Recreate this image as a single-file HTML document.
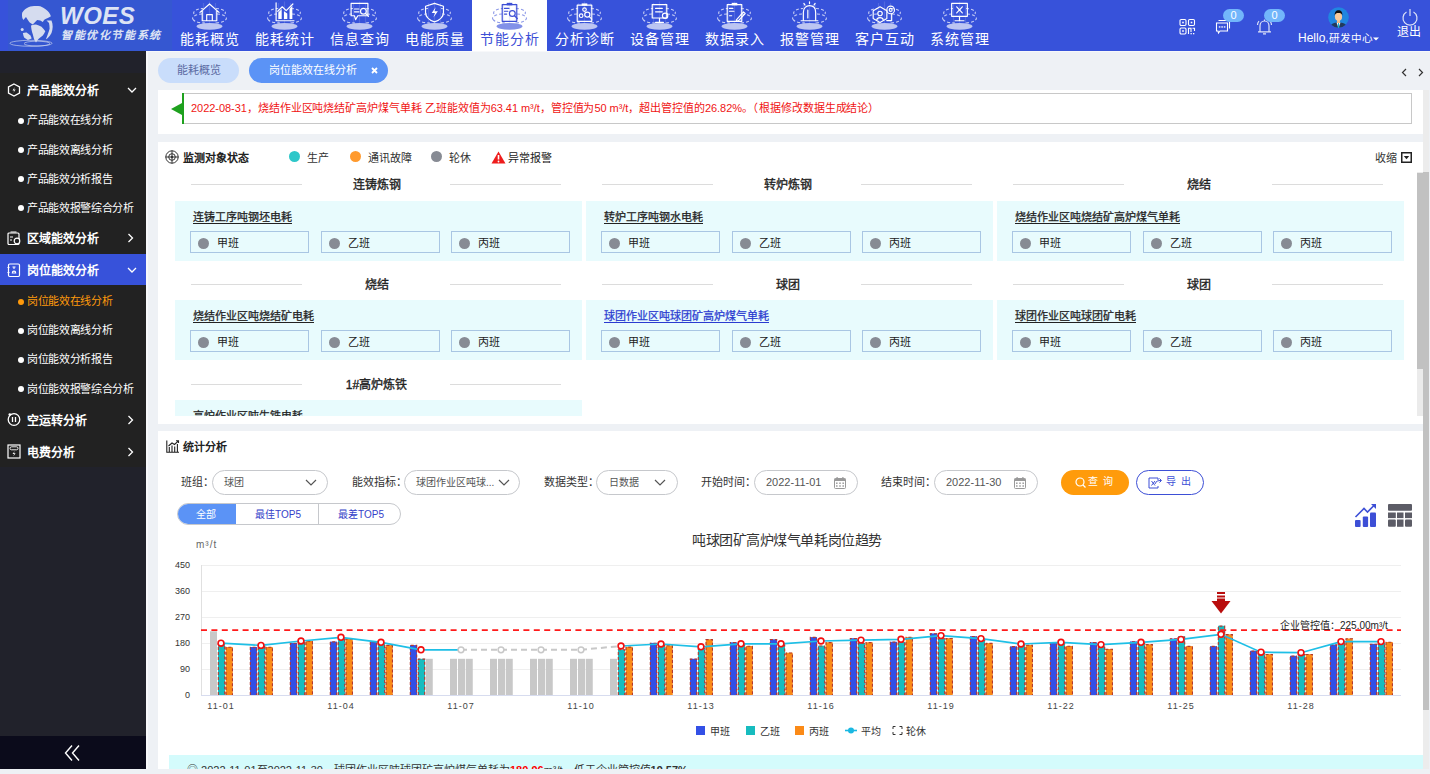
<!DOCTYPE html><html lang="zh-CN"><head><meta charset="utf-8"><style>
*{box-sizing:border-box;margin:0;padding:0}
html,body{width:1430px;height:774px;overflow:hidden;background:#eef1f5;font-family:"Liberation Sans",sans-serif;color:#333}
.a{position:absolute}
.t{position:absolute;white-space:nowrap}
.nav{position:absolute;top:0;width:75px;height:51px}
.nav .lb{position:absolute;left:0.35px;width:75px;top:31px;height:17px;line-height:17px;text-align:center;font-size:14px;letter-spacing:0.7px;color:#fff}
.nav svg{position:absolute;left:0;top:0}
.nav.on{background:#fff}
.nav.on .lb{color:#3d4fd6}
.mh{position:absolute;left:0;width:146px;height:31px}
.mh .tx{position:absolute;left:27px;top:0;line-height:31px;font-size:12px;font-weight:bold;color:#fff}
.mh svg{position:absolute}
.ms{position:absolute;left:0;width:146px;height:29px}
.ms .tx{position:absolute;left:27px;top:0;line-height:29px;font-size:11px;letter-spacing:-0.35px;color:#fff}
.ms .dot{position:absolute;left:18px;top:11.5px;width:6px;height:6px;border-radius:50%;background:#fff}
.pnl{position:absolute;background:#fff}
</style></head><body>
<div class="a" style="left:0;top:0;width:1430px;height:51px;background:#3752da"></div>
<div class="a" style="left:8px;top:0;width:164px;height:51px;background:#3557d1"></div>
<svg class="a" style="left:8px;top:2px" width="52" height="48" viewBox="8 2 52 48">
<ellipse cx="31" cy="43.3" rx="21" ry="3" fill="none" stroke="#c9d3ee" stroke-width="0.9" opacity="0.75"/>
<ellipse cx="37" cy="43.6" rx="13" ry="2.4" fill="none" stroke="#c9d3ee" stroke-width="0.9" opacity="0.75"/>
<g fill="#d5dcef">
<path d="M22.3 18.1 C21.8 15 22 13.5 22.3 12.6 C23.5 10.5 25 9 26.6 8.2 C29 6.8 31.5 6.1 34.1 6 C36.5 5.9 38.5 6 40.3 6.3 C42.5 7.2 44.3 8.2 45.9 9.5 C47.3 10.5 48.2 11.5 49 12.6 C49.8 13.8 50.4 15 50.9 16.3 C49.8 17 48.8 17.6 47.8 18.1 C46.6 18.6 45.5 18.9 44.6 19.4 C43.8 20.2 43.3 21 42.8 21.9 C42 21.5 41.2 21 40.3 20.6 C39.3 20.2 38.2 20 37.2 20 C36.3 20.8 35.5 21.6 34.7 22.5 C34 23.2 33.4 23.8 32.8 24.4 C31.7 23.8 30.7 23.1 29.7 22.5 C29 21.7 28.4 20.9 27.9 20 C27.2 19 26.6 18 26 16.9 C25 17.9 24.2 19 23.5 20 C23 19.4 22.6 18.8 22.3 18.1 Z"/>
<path d="M31 25.6 C32.6 24.8 34.3 24.4 36 24.4 C38 25 39.8 25.8 41.5 26.8 C43 28.2 44.3 29.6 45.3 31.2 C44.6 32.7 43.8 34.1 42.8 35.5 C41.6 36.6 40.3 37.6 39 38.6 C37.9 39.8 36.9 41.1 36 42.4 C35.3 41.4 34.7 40.4 34.1 39.3 C33.6 37.6 33.2 35.9 32.8 34.3 C32.3 32.9 31.9 31.4 31.6 30 C31.3 28.5 31.1 27 31 25.6 Z"/>
<path d="M22.9 33 C24.1 32.5 25.4 32.3 26.6 32.4 C28 33.3 29.3 34.4 30.4 35.5 C31 36.5 31.4 37.5 31.6 38.6 C30.4 39.2 29.2 39.6 27.9 39.9 C26.5 39.2 25.2 38.4 24.1 37.4 C23.5 36 23.1 34.5 22.9 33 Z"/>
<circle cx="22.2" cy="29.6" r="1.5"/>
<path d="M51.5 20.6 C52.3 22.6 52.7 24.7 52.7 26.8 C52.6 29 52.2 31 51.5 33 C50.5 34.9 49.3 36.6 47.8 38 C47.2 38.5 46.6 38.9 45.9 39.3 C46.6 37.6 47.2 36 47.8 34.3 C48.5 32.5 49.1 30.6 49.6 28.7 C49.6 26.8 49.4 25 49 23.1 C48.2 22.2 47.4 21.3 46.5 20.6 C48.2 20.5 49.8 20.5 51.5 20.6 Z"/>
</g>
</svg>
<div class="t" style="left:60px;top:3px;font-size:24px;line-height:26px;font-weight:bold;font-style:italic;color:#dde3f4;letter-spacing:0.5px">WOES</div>
<div class="t" style="left:61px;top:28px;font-size:11px;line-height:15px;font-weight:bold;font-style:italic;color:#dde3f4;letter-spacing:1.6px">智能优化节能系统</div>
<div class="nav" style="left:172px"><svg width="75" height="30" viewBox="0 0 75 30"><ellipse cx="37.5" cy="26.3" rx="13" ry="3.4" fill="#bcc5f2"/><path d="M31.5 3 V24 M37.5 1.5 V24 M43.5 3 V24" stroke="#c5ccf4" stroke-width="1.2" opacity="0.18"/><path d="M22 14 C20 11 26 8.5 31 8.5 M44 8.5 C49 8.5 55 11 53 14" stroke="#c5ccf4" stroke-width="1.1" fill="none" stroke-dasharray="3 2"/><path d="M21.5 20 C18 17 25 14 30 14 M45 14 C50 14 57 17 53.5 20 C51 22.5 45 23 42 23 M33 23 C30 23 24 22.5 21.5 20" stroke="#c5ccf4" stroke-width="1.1" fill="none" stroke-dasharray="3 2"/><g transform="translate(37.5 13.5) scale(1.12) translate(-37.5 -13)"><path d="M29 12 L37.5 4.5 L46 12 M31 10.5 V19.5 H44 V10.5 M35 19.5 V14 H40 V19.5" stroke="#ffffff" fill="none" stroke-width="1.05" stroke-linejoin="round" stroke-linecap="round"/></g></svg><div class="lb">能耗概览</div></div>
<div class="nav" style="left:247px"><svg width="75" height="30" viewBox="0 0 75 30"><ellipse cx="37.5" cy="26.3" rx="13" ry="3.4" fill="#bcc5f2"/><path d="M31.5 3 V24 M37.5 1.5 V24 M43.5 3 V24" stroke="#c5ccf4" stroke-width="1.2" opacity="0.18"/><path d="M22 14 C20 11 26 8.5 31 8.5 M44 8.5 C49 8.5 55 11 53 14" stroke="#c5ccf4" stroke-width="1.1" fill="none" stroke-dasharray="3 2"/><path d="M21.5 20 C18 17 25 14 30 14 M45 14 C50 14 57 17 53.5 20 C51 22.5 45 23 42 23 M33 23 C30 23 24 22.5 21.5 20" stroke="#c5ccf4" stroke-width="1.1" fill="none" stroke-dasharray="3 2"/><g transform="translate(37.5 13.5) scale(1.12) translate(-37.5 -13)"><path d="M30 3.5 V19.5 H46" stroke="#ffffff" fill="none" stroke-width="1.05" stroke-linejoin="round" stroke-linecap="round"/><path d="M32 18 V12 L35 9 V18 Z M37 18 V11 L40 13 V18 Z M42 18 V9 L44.5 6 V18 Z" fill="#ffffff"/><path d="M31.5 11 L35.5 7 L39 10.5 L45 4.5" stroke="#ffffff" fill="none" stroke-width="1.05" stroke-linejoin="round" stroke-linecap="round"/></g></svg><div class="lb">能耗统计</div></div>
<div class="nav" style="left:322px"><svg width="75" height="30" viewBox="0 0 75 30"><ellipse cx="37.5" cy="26.3" rx="13" ry="3.4" fill="#bcc5f2"/><path d="M31.5 3 V24 M37.5 1.5 V24 M43.5 3 V24" stroke="#c5ccf4" stroke-width="1.2" opacity="0.18"/><path d="M22 14 C20 11 26 8.5 31 8.5 M44 8.5 C49 8.5 55 11 53 14" stroke="#c5ccf4" stroke-width="1.1" fill="none" stroke-dasharray="3 2"/><path d="M21.5 20 C18 17 25 14 30 14 M45 14 C50 14 57 17 53.5 20 C51 22.5 45 23 42 23 M33 23 C30 23 24 22.5 21.5 20" stroke="#c5ccf4" stroke-width="1.1" fill="none" stroke-dasharray="3 2"/><g transform="translate(37.5 13.5) scale(1.12) translate(-37.5 -13)"><path d="M30 4 H45 V15 H36 L34 18.5 L33 15 H30 Z" stroke="#ffffff" fill="none" stroke-width="1.05" stroke-linejoin="round" stroke-linecap="round"/><path d="M33 9 H37 M33 11.5 H37" stroke="#ffffff" fill="none" stroke-width="1.05" stroke-linejoin="round" stroke-linecap="round"/><circle cx="41" cy="11" r="2.6" stroke="#ffffff" fill="none" stroke-width="1.05" stroke-linejoin="round" stroke-linecap="round"/><path d="M43 13 L45.5 15.5" stroke="#ffffff" fill="none" stroke-width="1.05" stroke-linejoin="round" stroke-linecap="round"/></g></svg><div class="lb">信息查询</div></div>
<div class="nav" style="left:397px"><svg width="75" height="30" viewBox="0 0 75 30"><ellipse cx="37.5" cy="26.3" rx="13" ry="3.4" fill="#bcc5f2"/><path d="M31.5 3 V24 M37.5 1.5 V24 M43.5 3 V24" stroke="#c5ccf4" stroke-width="1.2" opacity="0.18"/><path d="M22 14 C20 11 26 8.5 31 8.5 M44 8.5 C49 8.5 55 11 53 14" stroke="#c5ccf4" stroke-width="1.1" fill="none" stroke-dasharray="3 2"/><path d="M21.5 20 C18 17 25 14 30 14 M45 14 C50 14 57 17 53.5 20 C51 22.5 45 23 42 23 M33 23 C30 23 24 22.5 21.5 20" stroke="#c5ccf4" stroke-width="1.1" fill="none" stroke-dasharray="3 2"/><g transform="translate(37.5 13.5) scale(1.12) translate(-37.5 -13)"><path d="M37.5 4 L45.5 6.5 V12 C45.5 16 41.5 19 37.5 20.5 C33.5 19 29.5 16 29.5 12 V6.5 Z" stroke="#ffffff" fill="none" stroke-width="1.05" stroke-linejoin="round" stroke-linecap="round"/><path d="M38.5 7.5 L35 12.5 H38 L36.5 16.5 L40.5 11 H37.5 Z" fill="#ffffff"/></g></svg><div class="lb">电能质量</div></div>
<div class="nav on" style="left:472px"><svg width="75" height="30" viewBox="0 0 75 30"><ellipse cx="37.5" cy="26.3" rx="13" ry="3.4" fill="#8291e8"/><path d="M31.5 3 V24 M37.5 1.5 V24 M43.5 3 V24" stroke="#8f9be8" stroke-width="1.2" opacity="0.18"/><path d="M22 14 C20 11 26 8.5 31 8.5 M44 8.5 C49 8.5 55 11 53 14" stroke="#8f9be8" stroke-width="1.1" fill="none" stroke-dasharray="3 2"/><path d="M21.5 20 C18 17 25 14 30 14 M45 14 C50 14 57 17 53.5 20 C51 22.5 45 23 42 23 M33 23 C30 23 24 22.5 21.5 20" stroke="#8f9be8" stroke-width="1.1" fill="none" stroke-dasharray="3 2"/><g transform="translate(37.5 13.5) scale(1.12) translate(-37.5 -13)"><path d="M31 5 H44 V20 H31 Z" stroke="#3d4fd6" fill="none" stroke-width="1.05" stroke-linejoin="round" stroke-linecap="round"/><rect x="35" y="3.5" width="5" height="2.2" fill="#3d4fd6"/><path d="M33 8.5 H37 M33 11 H36 M33 13.5 H35" stroke="#3d4fd6" fill="none" stroke-width="1.05" stroke-linejoin="round" stroke-linecap="round"/><circle cx="40" cy="13" r="2.6" stroke="#3d4fd6" fill="none" stroke-width="1.05" stroke-linejoin="round" stroke-linecap="round"/><path d="M42 15 L44.5 17.5" stroke="#3d4fd6" fill="none" stroke-width="1.05" stroke-linejoin="round" stroke-linecap="round"/></g></svg><div class="lb">节能分析</div></div>
<div class="nav" style="left:547px"><svg width="75" height="30" viewBox="0 0 75 30"><ellipse cx="37.5" cy="26.3" rx="13" ry="3.4" fill="#bcc5f2"/><path d="M31.5 3 V24 M37.5 1.5 V24 M43.5 3 V24" stroke="#c5ccf4" stroke-width="1.2" opacity="0.18"/><path d="M22 14 C20 11 26 8.5 31 8.5 M44 8.5 C49 8.5 55 11 53 14" stroke="#c5ccf4" stroke-width="1.1" fill="none" stroke-dasharray="3 2"/><path d="M21.5 20 C18 17 25 14 30 14 M45 14 C50 14 57 17 53.5 20 C51 22.5 45 23 42 23 M33 23 C30 23 24 22.5 21.5 20" stroke="#c5ccf4" stroke-width="1.1" fill="none" stroke-dasharray="3 2"/><g transform="translate(37.5 13.5) scale(1.12) translate(-37.5 -13)"><path d="M31 5.5 H44 V20 H31 Z" stroke="#ffffff" fill="none" stroke-width="1.05" stroke-linejoin="round" stroke-linecap="round"/><rect x="35" y="4" width="5" height="2" fill="#ffffff"/><circle cx="37.5" cy="9.5" r="1.6" stroke="#ffffff" fill="none" stroke-width="1.05" stroke-linejoin="round" stroke-linecap="round"/><circle cx="34.5" cy="15" r="1.6" stroke="#ffffff" fill="none" stroke-width="1.05" stroke-linejoin="round" stroke-linecap="round"/><circle cx="40" cy="14" r="2.3" stroke="#ffffff" fill="none" stroke-width="1.05" stroke-linejoin="round" stroke-linecap="round"/><path d="M41.8 15.8 L44 18" stroke="#ffffff" fill="none" stroke-width="1.05" stroke-linejoin="round" stroke-linecap="round"/></g></svg><div class="lb">分析诊断</div></div>
<div class="nav" style="left:622px"><svg width="75" height="30" viewBox="0 0 75 30"><ellipse cx="37.5" cy="26.3" rx="13" ry="3.4" fill="#bcc5f2"/><path d="M31.5 3 V24 M37.5 1.5 V24 M43.5 3 V24" stroke="#c5ccf4" stroke-width="1.2" opacity="0.18"/><path d="M22 14 C20 11 26 8.5 31 8.5 M44 8.5 C49 8.5 55 11 53 14" stroke="#c5ccf4" stroke-width="1.1" fill="none" stroke-dasharray="3 2"/><path d="M21.5 20 C18 17 25 14 30 14 M45 14 C50 14 57 17 53.5 20 C51 22.5 45 23 42 23 M33 23 C30 23 24 22.5 21.5 20" stroke="#c5ccf4" stroke-width="1.1" fill="none" stroke-dasharray="3 2"/><g transform="translate(37.5 13.5) scale(1.12) translate(-37.5 -13)"><path d="M31 5 H44 V17 H31 Z M37.5 17 V20.5 M34 21 H41" stroke="#ffffff" fill="none" stroke-width="1.05" stroke-linejoin="round" stroke-linecap="round"/><path d="M34 8.5 H40 M34 11.5 H40" stroke="#ffffff" fill="none" stroke-width="1.05" stroke-linejoin="round" stroke-linecap="round"/><circle cx="42.5" cy="15" r="2.4" stroke="#ffffff" fill="none" stroke-width="1.05" stroke-linejoin="round" stroke-linecap="round"/></g></svg><div class="lb">设备管理</div></div>
<div class="nav" style="left:697px"><svg width="75" height="30" viewBox="0 0 75 30"><ellipse cx="37.5" cy="26.3" rx="13" ry="3.4" fill="#bcc5f2"/><path d="M31.5 3 V24 M37.5 1.5 V24 M43.5 3 V24" stroke="#c5ccf4" stroke-width="1.2" opacity="0.18"/><path d="M22 14 C20 11 26 8.5 31 8.5 M44 8.5 C49 8.5 55 11 53 14" stroke="#c5ccf4" stroke-width="1.1" fill="none" stroke-dasharray="3 2"/><path d="M21.5 20 C18 17 25 14 30 14 M45 14 C50 14 57 17 53.5 20 C51 22.5 45 23 42 23 M33 23 C30 23 24 22.5 21.5 20" stroke="#c5ccf4" stroke-width="1.1" fill="none" stroke-dasharray="3 2"/><g transform="translate(37.5 13.5) scale(1.12) translate(-37.5 -13)"><path d="M31 5 H44 V20 H31 Z" stroke="#ffffff" fill="none" stroke-width="1.05" stroke-linejoin="round" stroke-linecap="round"/><rect x="35" y="3.5" width="5" height="2.2" fill="#ffffff"/><path d="M33 8.5 H36 M33 11 H37 M33 15 H35" stroke="#ffffff" fill="none" stroke-width="1.05" stroke-linejoin="round" stroke-linecap="round"/><path d="M39 19 L45.5 11.5 L47 13 L40.5 20 Z" stroke="#ffffff" fill="none" stroke-width="1.05" stroke-linejoin="round" stroke-linecap="round"/></g></svg><div class="lb">数据录入</div></div>
<div class="nav" style="left:772px"><svg width="75" height="30" viewBox="0 0 75 30"><ellipse cx="37.5" cy="26.3" rx="13" ry="3.4" fill="#bcc5f2"/><path d="M31.5 3 V24 M37.5 1.5 V24 M43.5 3 V24" stroke="#c5ccf4" stroke-width="1.2" opacity="0.18"/><path d="M22 14 C20 11 26 8.5 31 8.5 M44 8.5 C49 8.5 55 11 53 14" stroke="#c5ccf4" stroke-width="1.1" fill="none" stroke-dasharray="3 2"/><path d="M21.5 20 C18 17 25 14 30 14 M45 14 C50 14 57 17 53.5 20 C51 22.5 45 23 42 23 M33 23 C30 23 24 22.5 21.5 20" stroke="#c5ccf4" stroke-width="1.1" fill="none" stroke-dasharray="3 2"/><g transform="translate(37.5 13.5) scale(1.12) translate(-37.5 -13)"><path d="M32 19 V12 C32 8 34.5 6 37.5 6 C40.5 6 43 8 43 12 V19" stroke="#ffffff" fill="none" stroke-width="1.05" stroke-linejoin="round" stroke-linecap="round"/><path d="M30 19.5 H45 M36 10 V17 M37.5 2.5 V4 M32.5 4 L33.5 5.5 M42.5 4 L41.5 5.5" stroke="#ffffff" fill="none" stroke-width="1.05" stroke-linejoin="round" stroke-linecap="round"/></g></svg><div class="lb">报警管理</div></div>
<div class="nav" style="left:847px"><svg width="75" height="30" viewBox="0 0 75 30"><ellipse cx="37.5" cy="26.3" rx="13" ry="3.4" fill="#bcc5f2"/><path d="M31.5 3 V24 M37.5 1.5 V24 M43.5 3 V24" stroke="#c5ccf4" stroke-width="1.2" opacity="0.18"/><path d="M22 14 C20 11 26 8.5 31 8.5 M44 8.5 C49 8.5 55 11 53 14" stroke="#c5ccf4" stroke-width="1.1" fill="none" stroke-dasharray="3 2"/><path d="M21.5 20 C18 17 25 14 30 14 M45 14 C50 14 57 17 53.5 20 C51 22.5 45 23 42 23 M33 23 C30 23 24 22.5 21.5 20" stroke="#c5ccf4" stroke-width="1.1" fill="none" stroke-dasharray="3 2"/><g transform="translate(37.5 13.5) scale(1.12) translate(-37.5 -13)"><path d="M33.5 7 L39.6 10.5 V17.5 L33.5 21 L27.4 17.5 V10.5 Z" stroke="#ffffff" fill="none" stroke-width="1.05" stroke-linejoin="round" stroke-linecap="round"/><circle cx="33.5" cy="13" r="2" stroke="#ffffff" fill="none" stroke-width="1.05" stroke-linejoin="round" stroke-linecap="round"/><path d="M30.6 18.8 C31 16 36 16 36.4 18.8" stroke="#ffffff" fill="none" stroke-width="1.05" stroke-linejoin="round" stroke-linecap="round"/><circle cx="43" cy="9.8" r="3.4" stroke="#ffffff" fill="none" stroke-width="1.05" stroke-linejoin="round" stroke-linecap="round"/><circle cx="43" cy="9.8" r="1.3" stroke="#ffffff" fill="none" stroke-width="1.05" stroke-linejoin="round" stroke-linecap="round"/><path d="M43.9 13.6 V19.3 H39.5" stroke="#ffffff" fill="none" stroke-width="1.05" stroke-linejoin="round" stroke-linecap="round"/></g></svg><div class="lb">客户互动</div></div>
<div class="nav" style="left:922px"><svg width="75" height="30" viewBox="0 0 75 30"><ellipse cx="37.5" cy="26.3" rx="13" ry="3.4" fill="#bcc5f2"/><path d="M31.5 3 V24 M37.5 1.5 V24 M43.5 3 V24" stroke="#c5ccf4" stroke-width="1.2" opacity="0.18"/><path d="M22 14 C20 11 26 8.5 31 8.5 M44 8.5 C49 8.5 55 11 53 14" stroke="#c5ccf4" stroke-width="1.1" fill="none" stroke-dasharray="3 2"/><path d="M21.5 20 C18 17 25 14 30 14 M45 14 C50 14 57 17 53.5 20 C51 22.5 45 23 42 23 M33 23 C30 23 24 22.5 21.5 20" stroke="#c5ccf4" stroke-width="1.1" fill="none" stroke-dasharray="3 2"/><g transform="translate(37.5 13.5) scale(1.12) translate(-37.5 -13)"><path d="M30.5 4 H44.5 V15.5 H30.5 Z M37.5 15.5 V19 M33.5 19.5 H41.5" stroke="#ffffff" fill="none" stroke-width="1.05" stroke-linejoin="round" stroke-linecap="round"/><path d="M35 7 L40 12.5 M40 7 L35 12.5" stroke="#ffffff" fill="none" stroke-width="1.05" stroke-linejoin="round" stroke-linecap="round"/></g></svg><div class="lb">系统管理</div></div>
<svg class="a" style="left:1179px;top:18px" width="17" height="17" viewBox="0 0 17 17">
<g fill="none" stroke="#fff" stroke-width="1.1">
<rect x="1" y="1.5" width="6" height="6" rx="1.2"/><rect x="9.5" y="1.5" width="6" height="6" rx="1.2"/><rect x="1" y="10" width="6" height="6" rx="1.2"/>
<path d="M9.5 16 V10.2 H12 V14 M13.5 10.2 H15.5 V13"/>
</g>
<g fill="#fff"><rect x="3.2" y="3.7" width="1.6" height="1.6"/><rect x="11.7" y="3.7" width="1.6" height="1.6"/><rect x="3.2" y="12.2" width="1.6" height="1.6"/><rect x="14" y="15" width="1.3" height="1.3"/><rect x="11.5" y="15" width="1.3" height="1.3"/></g>
</svg>
<svg class="a" style="left:1215px;top:19px" width="17" height="16" viewBox="0 0 17 16">
<g fill="none" stroke="#fff" stroke-width="1.1">
<path d="M3.5 1.5 H14.5 V9.5"/>
<path d="M1.5 4 H12.5 V12 H5 L3.5 14 L3 12 H1.5 Z"/>
</g>
<g fill="#fff"><rect x="3.8" y="7.3" width="1.6" height="1.3"/><rect x="6.3" y="7.3" width="1.6" height="1.3"/><rect x="8.8" y="7.3" width="1.6" height="1.3"/></g>
</svg>
<div class="a" style="left:1223px;top:9px;width:21px;height:13px;border-radius:7px;background:#72b6fb;color:#fff;font-size:11px;line-height:13px;text-align:center">0</div>
<svg class="a" style="left:1256px;top:18px" width="17" height="17" viewBox="0 0 17 17">
<g fill="none" stroke="#dfe4f8" stroke-width="1.2">
<path d="M4 13.5 V8 C4 5 6 3 8.5 3 C11 3 13 5 13 8 V13.5 M2 13.8 H15 M7 15.8 H10 M8.5 1.5 V3"/>
<path d="M1.5 7 C1.5 5 2.2 4 3 3.2 M15.5 7 C15.5 5 14.8 4 14 3.2"/>
</g></svg>
<div class="a" style="left:1264px;top:9px;width:21px;height:13px;border-radius:7px;background:#72b6fb;color:#fff;font-size:11px;line-height:13px;text-align:center">0</div>
<svg class="a" style="left:1328px;top:7px" width="21" height="21" viewBox="0 0 21 21">
<defs><clipPath id="avc"><circle cx="10.5" cy="10.5" r="10.3"/></clipPath></defs>
<circle cx="10.5" cy="10.5" r="10.3" fill="#2186e0"/>
<g clip-path="url(#avc)">
<path d="M2 21 C3 16 6 15.5 10.5 15.5 C15 15.5 18 16 19 21 Z" fill="#233a5c"/>
<path d="M8.5 15.5 L10.5 21 L12.5 15.5 Z" fill="#fff"/>
<path d="M10 16 L11 16 L11.3 21 L9.7 21 Z" fill="#1ab0d8"/>
<rect x="9" y="12.5" width="3" height="3.5" fill="#f0b98a"/>
<ellipse cx="10.5" cy="9.5" rx="3.6" ry="4.3" fill="#f7c99b"/>
<path d="M6.7 8.5 C6.5 4.5 8.5 3.2 10.5 3.2 C13 3.2 14.6 4.6 14.3 8.5 C13.8 6.5 12.5 6 10.5 6 C8.5 6 7.2 6.5 6.7 8.5 Z" fill="#111"/>
</g></svg>
<div class="t" style="left:1298px;top:31px;font-size:12px;line-height:14px;color:#fff">Hello,<span style="font-size:10.6px">研发中心</span></div>
<svg class="a" style="left:1373px;top:37px" width="6" height="4" viewBox="0 0 6 4"><path d="M0 0.5 H6 L3 3.5 Z" fill="#fff"/></svg>
<svg class="a" style="left:1401px;top:8px" width="18" height="18" viewBox="0 0 18 18">
<path d="M5.5 4 A7 7 0 1 0 12.5 4" fill="none" stroke="#dfe4f8" stroke-width="1.2"/>
<path d="M9 1 V8" stroke="#dfe4f8" stroke-width="1.2"/></svg>
<div class="t" style="left:1397px;top:25px;font-size:12px;line-height:14px;color:#fff">退出</div>
<div class="a" style="left:146px;top:51px;width:1284px;height:1px;background:#f7f8fa"></div>
<div class="a" style="left:0;top:51px;width:146px;height:718px;background:#21222b"></div>
<div class="a" style="left:0;top:73px;width:146px;height:394px;background:#222222"></div>
<div class="a" style="left:0;top:736px;width:146px;height:33px;background:#0b0b1b"></div>
<svg class="a" style="left:64px;top:744px" width="17" height="18" viewBox="0 0 17 18"><path d="M8 1.5 L1.5 9 L8 16.5 M15 1.5 L8.5 9 L15 16.5" fill="none" stroke="#fff" stroke-width="1.4"/></svg>
<div class="a" style="left:0;top:254px;width:146px;height:31px;background:#3752da"></div>
<div class="mh" style="top:76.3px"><div class="tx">产品能效分析</div></div>
<svg class="a" style="left:6.5px;top:82.5px" width="14" height="15" viewBox="0 0 14 15"><path d="M7 1 L12.5 4 V10 L7 13 L1.5 10 V4 Z" fill="none" stroke="#fff" stroke-width="1.3"/><path d="M7.8 4 L5.5 7.5 H7.3 L6.3 10 L8.6 6.6 H6.9 Z" fill="#fff"/></svg>
<svg class="a" style="left:127px;top:87.0px" width="10" height="6" viewBox="0 0 10 6"><path d="M1 1 L5 5 L9 1" fill="none" stroke="#fff" stroke-width="1.3"/></svg>
<div class="ms" style="top:106.0px"><div class="dot" style="background:#fff"></div><div class="tx" style="color:#fff">产品能效在线分析</div></div>
<div class="ms" style="top:135.5px"><div class="dot" style="background:#fff"></div><div class="tx" style="color:#fff">产品能效离线分析</div></div>
<div class="ms" style="top:164.5px"><div class="dot" style="background:#fff"></div><div class="tx" style="color:#fff">产品能效分析报告</div></div>
<div class="ms" style="top:193.5px"><div class="dot" style="background:#fff"></div><div class="tx" style="color:#fff">产品能效报警综合分析</div></div>
<div class="mh" style="top:224.3px"><div class="tx">区域能效分析</div></div>
<svg class="a" style="left:6.5px;top:230.5px" width="14" height="15" viewBox="0 0 14 15"><rect x="1" y="2" width="11" height="11.5" rx="1" fill="none" stroke="#fff" stroke-width="1.2"/><path d="M3.5 1 H9.5 M3 6 H6 M3 9 H5" stroke="#fff" stroke-width="1.2"/><circle cx="10" cy="10" r="2.8" fill="#222" stroke="#fff" stroke-width="1.2"/></svg>
<svg class="a" style="left:127px;top:233.0px" width="7" height="10" viewBox="0 0 7 10"><path d="M1.5 1 L5.5 5 L1.5 9" fill="none" stroke="#fff" stroke-width="1.3"/></svg>
<div class="mh" style="top:256.3px"><div class="tx">岗位能效分析</div></div>
<svg class="a" style="left:6.5px;top:262.5px" width="14" height="15" viewBox="0 0 14 15"><rect x="1.5" y="1" width="11" height="12.5" rx="1.2" fill="none" stroke="#fff" stroke-width="1.2"/><path d="M0.5 4.5 H2.5 M0.5 9.5 H2.5 M5.5 4 H8.5 M7 4 V6 M5.3 10 C5.3 7.5 8.7 7.5 8.7 10 Z" fill="none" stroke="#fff" stroke-width="1.1"/></svg>
<svg class="a" style="left:127px;top:267.0px" width="10" height="6" viewBox="0 0 10 6"><path d="M1 1 L5 5 L9 1" fill="none" stroke="#fff" stroke-width="1.3"/></svg>
<div class="ms" style="top:287.0px"><div class="dot" style="background:#ff9a0b"></div><div class="tx" style="color:#ff9a0b">岗位能效在线分析</div></div>
<div class="ms" style="top:316.0px"><div class="dot" style="background:#fff"></div><div class="tx" style="color:#fff">岗位能效离线分析</div></div>
<div class="ms" style="top:345.0px"><div class="dot" style="background:#fff"></div><div class="tx" style="color:#fff">岗位能效分析报告</div></div>
<div class="ms" style="top:374.5px"><div class="dot" style="background:#fff"></div><div class="tx" style="color:#fff">岗位能效报警综合分析</div></div>
<div class="mh" style="top:406.0px"><div class="tx">空运转分析</div></div>
<svg class="a" style="left:6.5px;top:412.2px" width="14" height="15" viewBox="0 0 14 15"><circle cx="7" cy="7.5" r="5.8" fill="none" stroke="#fff" stroke-width="1.3"/><path d="M5.5 5 V10 M8.5 5 V10" stroke="#fff" stroke-width="1.3"/><circle cx="2.8" cy="2.5" r="1.3" fill="#fff"/></svg>
<svg class="a" style="left:127px;top:414.7px" width="7" height="10" viewBox="0 0 7 10"><path d="M1.5 1 L5.5 5 L1.5 9" fill="none" stroke="#fff" stroke-width="1.3"/></svg>
<div class="mh" style="top:438.0px"><div class="tx">电费分析</div></div>
<svg class="a" style="left:6.5px;top:444.2px" width="14" height="15" viewBox="0 0 14 15"><rect x="1" y="1" width="12" height="13" fill="none" stroke="#fff" stroke-width="1.2"/><rect x="3" y="2.8" width="8" height="3" rx="1.5" fill="none" stroke="#fff" stroke-width="0.9"/><path d="M7.8 7 L5.5 10 H7.2 L6.2 12.5 L8.6 9.3 H6.9 Z" fill="#fff"/></svg>
<svg class="a" style="left:127px;top:446.7px" width="7" height="10" viewBox="0 0 7 10"><path d="M1.5 1 L5.5 5 L1.5 9" fill="none" stroke="#fff" stroke-width="1.3"/></svg>
<div class="a" style="left:146px;top:52px;width:2px;height:717px;background:#f8f9fb"></div>
<div class="a" style="left:158px;top:58px;width:81px;height:25px;border-radius:12.5px;background:#c9ddfb"></div>
<div class="t" style="left:158px;top:58px;width:81px;height:25px;line-height:25px;text-align:center;font-size:11px;color:#5c6ba3">能耗概览</div>
<div class="a" style="left:249px;top:58px;width:139px;height:25px;border-radius:12.5px;background:#5b93f6"></div>
<div class="t" style="left:269px;top:58px;height:25px;line-height:25px;font-size:11px;color:#fff">岗位能效在线分析</div>
<svg class="a" style="left:371px;top:67px" width="7" height="7" viewBox="0 0 7 7"><path d="M1 1 L6 6 M6 1 L1 6" stroke="#fff" stroke-width="1.8"/></svg>
<svg class="a" style="left:1401px;top:68px" width="6" height="9" viewBox="0 0 6 9"><path d="M5 1 L1.5 4.5 L5 8" fill="none" stroke="#333" stroke-width="1.2"/></svg>
<svg class="a" style="left:1418px;top:68px" width="6" height="9" viewBox="0 0 6 9"><path d="M1 1 L4.5 4.5 L1 8" fill="none" stroke="#333" stroke-width="1.2"/></svg>
<div class="pnl" style="left:158px;top:90px;width:1265px;height:44px"></div>
<div class="a" style="left:184px;top:93px;width:1228px;height:31px;border:1px solid #c8c8c8;border-left:none"></div>
<div class="a" style="left:182px;top:93px;width:2px;height:31px;background:#1ea11e"></div>
<svg class="a" style="left:171px;top:103px" width="11" height="12" viewBox="0 0 11 12"><path d="M11 0 V12 L0 6 Z" fill="#1ea11e"/></svg>
<div class="t" style="left:191px;top:100px;height:16px;line-height:16px;font-size:11px;letter-spacing:-0.05px;color:#f01414">2022-08-31，烧结作业区吨烧结矿高炉煤气单耗 乙班能效值为63.41 m³/t，管控值为50 m³/t，超出管控值的26.82%。（根据修改数据生成结论）</div>
<div class="pnl" style="left:158px;top:142px;width:1265px;height:282px"></div>
<svg class="a" style="left:165px;top:150px" width="14" height="14" viewBox="0 0 14 14"><g fill="none" stroke="#333" stroke-width="1"><circle cx="7" cy="7" r="6.2"/><circle cx="7" cy="7" r="3.3"/><path d="M7 0.5 V13.5 M0.5 7 H13.5"/></g><circle cx="7" cy="7" r="1.2" fill="#333"/></svg>
<div class="t" style="left:183px;top:150px;height:16px;line-height:16px;font-size:11px;font-weight:bold;color:#222">监测对象状态</div>
<div class="a" style="left:289px;top:151px;width:11px;height:11px;border-radius:50%;background:#2ec7c9"></div>
<div class="t" style="left:307px;top:150px;height:16px;line-height:16px;font-size:11px;color:#333">生产</div>
<div class="a" style="left:350px;top:151px;width:11px;height:11px;border-radius:50%;background:#ff9a2e"></div>
<div class="t" style="left:368px;top:150px;height:16px;line-height:16px;font-size:11px;color:#333">通讯故障</div>
<div class="a" style="left:431px;top:151px;width:11px;height:11px;border-radius:50%;background:#878b94"></div>
<div class="t" style="left:449px;top:150px;height:16px;line-height:16px;font-size:11px;color:#333">轮休</div>
<svg class="a" style="left:491px;top:151px" width="15" height="13" viewBox="0 0 15 13"><path d="M7.5 0.5 L14.5 12.5 H0.5 Z" fill="#ee1c1c"/><path d="M7.5 4 V8.5" stroke="#fff" stroke-width="1.6"/><circle cx="7.5" cy="10.5" r="0.9" fill="#fff"/></svg>
<div class="t" style="left:508px;top:150px;height:16px;line-height:16px;font-size:11px;color:#222">异常报警</div>
<div class="t" style="left:1375px;top:150px;height:16px;line-height:16px;font-size:11px;color:#333">收缩</div>
<svg class="a" style="left:1401px;top:152px" width="11" height="11" viewBox="0 0 11 11"><rect x="0.75" y="0.75" width="9.5" height="9.5" fill="#fff" stroke="#222" stroke-width="1.5"/><path d="M2.8 4 H8.2 L5.5 7.3 Z" fill="#222"/></svg>
<div class="a" style="left:158px;top:172px;width:1259px;height:244px;overflow:hidden">
<div class="a" style="left:33px;top:12px;width:111px;height:1px;background:#dcdcdc"></div>
<div class="a" style="left:292px;top:12px;width:111px;height:1px;background:#dcdcdc"></div>
<div class="t" style="left:15px;top:5px;width:407px;height:16px;line-height:16px;text-align:center;font-size:12px;-webkit-text-stroke:0.35px #222;color:#222">连铸炼钢</div>
<div class="a" style="left:17px;top:29px;width:407px;height:60px;background:#e8fbfd"></div>
<div class="t" style="left:35px;top:37px;height:16px;line-height:16px;font-size:11px;-webkit-text-stroke:0.25px #222;color:#222;text-decoration:underline;text-underline-offset:2px">连铸工序吨钢坯电耗</div>
<div class="a" style="left:32px;top:59px;width:119px;height:22px;border:1px solid #a9c6e3"></div>
<div class="a" style="left:40px;top:66px;width:11px;height:11px;border-radius:50%;background:#878b94"></div>
<div class="t" style="left:59px;top:63px;height:16px;line-height:16px;font-size:11px;color:#222">甲班</div>
<div class="a" style="left:163px;top:59px;width:119px;height:22px;border:1px solid #a9c6e3"></div>
<div class="a" style="left:171px;top:66px;width:11px;height:11px;border-radius:50%;background:#878b94"></div>
<div class="t" style="left:190px;top:63px;height:16px;line-height:16px;font-size:11px;color:#222">乙班</div>
<div class="a" style="left:293px;top:59px;width:119px;height:22px;border:1px solid #a9c6e3"></div>
<div class="a" style="left:301px;top:66px;width:11px;height:11px;border-radius:50%;background:#878b94"></div>
<div class="t" style="left:320px;top:63px;height:16px;line-height:16px;font-size:11px;color:#222">丙班</div>
<div class="a" style="left:444px;top:12px;width:111px;height:1px;background:#dcdcdc"></div>
<div class="a" style="left:703px;top:12px;width:111px;height:1px;background:#dcdcdc"></div>
<div class="t" style="left:426px;top:5px;width:407px;height:16px;line-height:16px;text-align:center;font-size:12px;-webkit-text-stroke:0.35px #222;color:#222">转炉炼钢</div>
<div class="a" style="left:428px;top:29px;width:407px;height:60px;background:#e8fbfd"></div>
<div class="t" style="left:446px;top:37px;height:16px;line-height:16px;font-size:11px;-webkit-text-stroke:0.25px #222;color:#222;text-decoration:underline;text-underline-offset:2px">转炉工序吨钢水电耗</div>
<div class="a" style="left:443px;top:59px;width:119px;height:22px;border:1px solid #a9c6e3"></div>
<div class="a" style="left:451px;top:66px;width:11px;height:11px;border-radius:50%;background:#878b94"></div>
<div class="t" style="left:470px;top:63px;height:16px;line-height:16px;font-size:11px;color:#222">甲班</div>
<div class="a" style="left:574px;top:59px;width:119px;height:22px;border:1px solid #a9c6e3"></div>
<div class="a" style="left:582px;top:66px;width:11px;height:11px;border-radius:50%;background:#878b94"></div>
<div class="t" style="left:601px;top:63px;height:16px;line-height:16px;font-size:11px;color:#222">乙班</div>
<div class="a" style="left:704px;top:59px;width:119px;height:22px;border:1px solid #a9c6e3"></div>
<div class="a" style="left:712px;top:66px;width:11px;height:11px;border-radius:50%;background:#878b94"></div>
<div class="t" style="left:731px;top:63px;height:16px;line-height:16px;font-size:11px;color:#222">丙班</div>
<div class="a" style="left:855px;top:12px;width:111px;height:1px;background:#dcdcdc"></div>
<div class="a" style="left:1114px;top:12px;width:111px;height:1px;background:#dcdcdc"></div>
<div class="t" style="left:837px;top:5px;width:407px;height:16px;line-height:16px;text-align:center;font-size:12px;-webkit-text-stroke:0.35px #222;color:#222">烧结</div>
<div class="a" style="left:839px;top:29px;width:407px;height:60px;background:#e8fbfd"></div>
<div class="t" style="left:857px;top:37px;height:16px;line-height:16px;font-size:11px;-webkit-text-stroke:0.25px #222;color:#222;text-decoration:underline;text-underline-offset:2px">烧结作业区吨烧结矿高炉煤气单耗</div>
<div class="a" style="left:854px;top:59px;width:119px;height:22px;border:1px solid #a9c6e3"></div>
<div class="a" style="left:862px;top:66px;width:11px;height:11px;border-radius:50%;background:#878b94"></div>
<div class="t" style="left:881px;top:63px;height:16px;line-height:16px;font-size:11px;color:#222">甲班</div>
<div class="a" style="left:985px;top:59px;width:119px;height:22px;border:1px solid #a9c6e3"></div>
<div class="a" style="left:993px;top:66px;width:11px;height:11px;border-radius:50%;background:#878b94"></div>
<div class="t" style="left:1012px;top:63px;height:16px;line-height:16px;font-size:11px;color:#222">乙班</div>
<div class="a" style="left:1115px;top:59px;width:119px;height:22px;border:1px solid #a9c6e3"></div>
<div class="a" style="left:1123px;top:66px;width:11px;height:11px;border-radius:50%;background:#878b94"></div>
<div class="t" style="left:1142px;top:63px;height:16px;line-height:16px;font-size:11px;color:#222">丙班</div>
<div class="a" style="left:33px;top:112px;width:111px;height:1px;background:#dcdcdc"></div>
<div class="a" style="left:292px;top:112px;width:111px;height:1px;background:#dcdcdc"></div>
<div class="t" style="left:15px;top:105px;width:407px;height:16px;line-height:16px;text-align:center;font-size:12px;-webkit-text-stroke:0.35px #222;color:#222">烧结</div>
<div class="a" style="left:17px;top:128px;width:407px;height:60px;background:#e8fbfd"></div>
<div class="t" style="left:35px;top:136px;height:16px;line-height:16px;font-size:11px;-webkit-text-stroke:0.25px #222;color:#222;text-decoration:underline;text-underline-offset:2px">烧结作业区吨烧结矿电耗</div>
<div class="a" style="left:32px;top:158px;width:119px;height:22px;border:1px solid #a9c6e3"></div>
<div class="a" style="left:40px;top:165px;width:11px;height:11px;border-radius:50%;background:#878b94"></div>
<div class="t" style="left:59px;top:162px;height:16px;line-height:16px;font-size:11px;color:#222">甲班</div>
<div class="a" style="left:163px;top:158px;width:119px;height:22px;border:1px solid #a9c6e3"></div>
<div class="a" style="left:171px;top:165px;width:11px;height:11px;border-radius:50%;background:#878b94"></div>
<div class="t" style="left:190px;top:162px;height:16px;line-height:16px;font-size:11px;color:#222">乙班</div>
<div class="a" style="left:293px;top:158px;width:119px;height:22px;border:1px solid #a9c6e3"></div>
<div class="a" style="left:301px;top:165px;width:11px;height:11px;border-radius:50%;background:#878b94"></div>
<div class="t" style="left:320px;top:162px;height:16px;line-height:16px;font-size:11px;color:#222">丙班</div>
<div class="a" style="left:444px;top:112px;width:111px;height:1px;background:#dcdcdc"></div>
<div class="a" style="left:703px;top:112px;width:111px;height:1px;background:#dcdcdc"></div>
<div class="t" style="left:426px;top:105px;width:407px;height:16px;line-height:16px;text-align:center;font-size:12px;-webkit-text-stroke:0.35px #222;color:#222">球团</div>
<div class="a" style="left:428px;top:128px;width:407px;height:60px;background:#e8fbfd"></div>
<div class="t" style="left:446px;top:136px;height:16px;line-height:16px;font-size:11px;-webkit-text-stroke:0.25px #2b3bd0;color:#2b3bd0;text-decoration:underline;text-underline-offset:2px">球团作业区吨球团矿高炉煤气单耗</div>
<div class="a" style="left:443px;top:158px;width:119px;height:22px;border:1px solid #a9c6e3"></div>
<div class="a" style="left:451px;top:165px;width:11px;height:11px;border-radius:50%;background:#878b94"></div>
<div class="t" style="left:470px;top:162px;height:16px;line-height:16px;font-size:11px;color:#222">甲班</div>
<div class="a" style="left:574px;top:158px;width:119px;height:22px;border:1px solid #a9c6e3"></div>
<div class="a" style="left:582px;top:165px;width:11px;height:11px;border-radius:50%;background:#878b94"></div>
<div class="t" style="left:601px;top:162px;height:16px;line-height:16px;font-size:11px;color:#222">乙班</div>
<div class="a" style="left:704px;top:158px;width:119px;height:22px;border:1px solid #a9c6e3"></div>
<div class="a" style="left:712px;top:165px;width:11px;height:11px;border-radius:50%;background:#878b94"></div>
<div class="t" style="left:731px;top:162px;height:16px;line-height:16px;font-size:11px;color:#222">丙班</div>
<div class="a" style="left:855px;top:112px;width:111px;height:1px;background:#dcdcdc"></div>
<div class="a" style="left:1114px;top:112px;width:111px;height:1px;background:#dcdcdc"></div>
<div class="t" style="left:837px;top:105px;width:407px;height:16px;line-height:16px;text-align:center;font-size:12px;-webkit-text-stroke:0.35px #222;color:#222">球团</div>
<div class="a" style="left:839px;top:128px;width:407px;height:60px;background:#e8fbfd"></div>
<div class="t" style="left:857px;top:136px;height:16px;line-height:16px;font-size:11px;-webkit-text-stroke:0.25px #222;color:#222;text-decoration:underline;text-underline-offset:2px">球团作业区吨球团矿电耗</div>
<div class="a" style="left:854px;top:158px;width:119px;height:22px;border:1px solid #a9c6e3"></div>
<div class="a" style="left:862px;top:165px;width:11px;height:11px;border-radius:50%;background:#878b94"></div>
<div class="t" style="left:881px;top:162px;height:16px;line-height:16px;font-size:11px;color:#222">甲班</div>
<div class="a" style="left:985px;top:158px;width:119px;height:22px;border:1px solid #a9c6e3"></div>
<div class="a" style="left:993px;top:165px;width:11px;height:11px;border-radius:50%;background:#878b94"></div>
<div class="t" style="left:1012px;top:162px;height:16px;line-height:16px;font-size:11px;color:#222">乙班</div>
<div class="a" style="left:1115px;top:158px;width:119px;height:22px;border:1px solid #a9c6e3"></div>
<div class="a" style="left:1123px;top:165px;width:11px;height:11px;border-radius:50%;background:#878b94"></div>
<div class="t" style="left:1142px;top:162px;height:16px;line-height:16px;font-size:11px;color:#222">丙班</div>
<div class="a" style="left:33px;top:212px;width:111px;height:1px;background:#dcdcdc"></div>
<div class="a" style="left:292px;top:212px;width:111px;height:1px;background:#dcdcdc"></div>
<div class="t" style="left:15px;top:205px;width:407px;height:16px;line-height:16px;text-align:center;font-size:12px;-webkit-text-stroke:0.35px #222;color:#222">1#高炉炼铁</div>
<div class="a" style="left:17px;top:228px;width:407px;height:60px;background:#e8fbfd"></div>
<div class="t" style="left:35px;top:236px;height:16px;line-height:16px;font-size:11px;-webkit-text-stroke:0.25px #222;color:#222;text-decoration:underline;text-underline-offset:2px">高炉作业区吨生铁电耗</div>
<div class="a" style="left:32px;top:258px;width:119px;height:22px;border:1px solid #a9c6e3"></div>
<div class="a" style="left:40px;top:265px;width:11px;height:11px;border-radius:50%;background:#878b94"></div>
<div class="t" style="left:59px;top:262px;height:16px;line-height:16px;font-size:11px;color:#222">甲班</div>
<div class="a" style="left:163px;top:258px;width:119px;height:22px;border:1px solid #a9c6e3"></div>
<div class="a" style="left:171px;top:265px;width:11px;height:11px;border-radius:50%;background:#878b94"></div>
<div class="t" style="left:190px;top:262px;height:16px;line-height:16px;font-size:11px;color:#222">乙班</div>
<div class="a" style="left:293px;top:258px;width:119px;height:22px;border:1px solid #a9c6e3"></div>
<div class="a" style="left:301px;top:265px;width:11px;height:11px;border-radius:50%;background:#878b94"></div>
<div class="t" style="left:320px;top:262px;height:16px;line-height:16px;font-size:11px;color:#222">丙班</div>
</div>
<div class="a" style="left:1417px;top:172px;width:6px;height:244px;background:#ebebeb"></div>
<div class="a" style="left:1417px;top:173px;width:6px;height:196px;background:#c1c1c1"></div>
<div class="pnl" style="left:158px;top:431px;width:1265px;height:338px"></div>
<svg class="a" style="left:166px;top:440px" width="14" height="13" viewBox="0 0 14 13"><g fill="none" stroke="#222" stroke-width="1.1"><path d="M0.8 0.5 V12.3 H13"/><path d="M3.3 12 V7 M6 12 V5.5 M8.7 12 V6.5 M11.4 12 V4"/><path d="M2.5 6 L6 3 L8.5 4.5 L12.5 0.8 M10 0.8 H12.5 V3"/></g></svg>
<div class="t" style="left:183px;top:439px;height:16px;line-height:16px;font-size:11px;font-weight:bold;color:#222">统计分析</div>
<div class="a" style="left:1423px;top:90px;width:6px;height:679px;background:#ececec"></div>
<div class="a" style="left:1423px;top:172px;width:6px;height:538px;background:#c1c1c1"></div>
<div class="t" style="left:181px;top:474px;height:16px;line-height:16px;font-size:11px;color:#333;">班组：</div>
<div class="a" style="left:212px;top:470px;width:116px;height:25px;border:1px solid #c6c8cc;border-radius:12.5px"></div>
<div class="t" style="left:224px;top:475px;height:16px;line-height:16px;font-size:10px;color:#555;">球团</div>
<svg class="a" style="left:305px;top:479px" width="12" height="7" viewBox="0 0 12 7"><path d="M1 1 L6 6 L11 1" fill="none" stroke="#555" stroke-width="1.2"/></svg>
<div class="t" style="left:352px;top:474px;height:16px;line-height:16px;font-size:11px;color:#333;">能效指标：</div>
<div class="a" style="left:404px;top:470px;width:116px;height:25px;border:1px solid #c6c8cc;border-radius:12.5px"></div>
<div class="t" style="left:416px;top:475px;height:16px;line-height:16px;font-size:10px;color:#555;">球团作业区吨球...</div>
<svg class="a" style="left:498px;top:479px" width="12" height="7" viewBox="0 0 12 7"><path d="M1 1 L6 6 L11 1" fill="none" stroke="#555" stroke-width="1.2"/></svg>
<div class="t" style="left:544px;top:474px;height:16px;line-height:16px;font-size:11px;color:#333;">数据类型：</div>
<div class="a" style="left:596px;top:470px;width:82px;height:25px;border:1px solid #c6c8cc;border-radius:12.5px"></div>
<div class="t" style="left:609px;top:475px;height:16px;line-height:16px;font-size:10px;color:#555;">日数据</div>
<svg class="a" style="left:654px;top:479px" width="12" height="7" viewBox="0 0 12 7"><path d="M1 1 L6 6 L11 1" fill="none" stroke="#555" stroke-width="1.2"/></svg>
<div class="t" style="left:701px;top:474px;height:16px;line-height:16px;font-size:11px;color:#333;">开始时间：</div>
<div class="a" style="left:754px;top:470px;width:104px;height:25px;border:1px solid #c6c8cc;border-radius:12.5px"></div>
<div class="t" style="left:766px;top:474px;height:16px;line-height:16px;font-size:11px;color:#555;">2022-11-01</div>
<svg class="a" style="left:834px;top:477px" width="12" height="12" viewBox="0 0 12 12"><g fill="#999"><rect x="0.5" y="1.5" width="11" height="10" rx="1" fill="none" stroke="#999" stroke-width="1"/><rect x="0.5" y="1.5" width="11" height="2.5"/><rect x="2.5" y="0" width="1.2" height="2.5"/><rect x="8.3" y="0" width="1.2" height="2.5"/><rect x="2" y="5.5" width="1.6" height="1.4"/><rect x="5.2" y="5.5" width="1.6" height="1.4"/><rect x="8.4" y="5.5" width="1.6" height="1.4"/><rect x="2" y="8.3" width="1.6" height="1.4"/><rect x="5.2" y="8.3" width="1.6" height="1.4"/><rect x="8.4" y="8.3" width="1.6" height="1.4"/></g></svg>
<div class="t" style="left:881px;top:474px;height:16px;line-height:16px;font-size:11px;color:#333;">结束时间：</div>
<div class="a" style="left:934px;top:470px;width:104px;height:25px;border:1px solid #c6c8cc;border-radius:12.5px"></div>
<div class="t" style="left:946px;top:474px;height:16px;line-height:16px;font-size:11px;color:#555;">2022-11-30</div>
<svg class="a" style="left:1014px;top:477px" width="12" height="12" viewBox="0 0 12 12"><g fill="#999"><rect x="0.5" y="1.5" width="11" height="10" rx="1" fill="none" stroke="#999" stroke-width="1"/><rect x="0.5" y="1.5" width="11" height="2.5"/><rect x="2.5" y="0" width="1.2" height="2.5"/><rect x="8.3" y="0" width="1.2" height="2.5"/><rect x="2" y="5.5" width="1.6" height="1.4"/><rect x="5.2" y="5.5" width="1.6" height="1.4"/><rect x="8.4" y="5.5" width="1.6" height="1.4"/><rect x="2" y="8.3" width="1.6" height="1.4"/><rect x="5.2" y="8.3" width="1.6" height="1.4"/><rect x="8.4" y="8.3" width="1.6" height="1.4"/></g></svg>
<div class="a" style="left:1061px;top:470px;width:68px;height:25px;border-radius:12.5px;background:#ff9b0b"></div>
<svg class="a" style="left:1075px;top:477px" width="11" height="12" viewBox="0 0 11 12"><circle cx="5" cy="5" r="4" fill="none" stroke="#fff" stroke-width="1.2"/><path d="M8 8 L10.5 10.5" stroke="#fff" stroke-width="1.2"/></svg>
<div class="t" style="left:1088px;top:474px;height:16px;line-height:16px;font-size:10px;color:#fff;letter-spacing:1px">查 询</div>
<div class="a" style="left:1136px;top:470px;width:68px;height:25px;border-radius:12.5px;border:1px solid #3d4fd6"></div>
<svg class="a" style="left:1148px;top:477px" width="15" height="12" viewBox="0 0 15 12"><g fill="none" stroke="#3d4fd6" stroke-width="1"><path d="M10 3 V1 H1 V11 H10 V9"/><path d="M3.5 4 L7 8.5 M7 4 L3.5 8.5"/><path d="M7 7 C8 4 10 3.5 13 3.5 M11.5 1.5 L13.5 3.5 L11.5 5.5"/></g></svg>
<div class="t" style="left:1166px;top:474px;height:16px;line-height:16px;font-size:10px;color:#3d4fd6;letter-spacing:1px">导 出</div>
<div class="a" style="left:177px;top:503px;width:224px;height:22px;border:1px solid #c6c8cc;border-radius:11px;overflow:hidden"><div class="a" style="left:0;top:0;width:58px;height:20px;background:#5b93f6"></div><div class="a" style="left:140px;top:0;width:1px;height:20px;background:#c6c8cc"></div></div>
<div class="t" style="left:177px;top:507px;height:16px;line-height:16px;font-size:10px;color:#fff;width:58px;text-align:center">全部</div>
<div class="t" style="left:255px;top:507px;height:16px;line-height:16px;font-size:10px;color:#3441c9;">最佳TOP5</div>
<div class="t" style="left:338px;top:507px;height:16px;line-height:16px;font-size:10px;color:#3441c9;">最差TOP5</div>
<svg class="a" style="left:1354px;top:503px" width="23" height="25" viewBox="0 0 23 25"><g fill="#3d4fd6"><rect x="1" y="17" width="5.6" height="7" rx="1"/><rect x="8.8" y="13.5" width="5.3" height="10.5" rx="1"/><rect x="16" y="9.5" width="6" height="14.5" rx="1"/></g><path d="M1.5 14 L10 5.5 L13.5 9 L20.5 2" fill="none" stroke="#3d4fd6" stroke-width="1.6"/><path d="M17 1 H22 V6 Z" fill="#3d4fd6"/></svg>
<svg class="a" style="left:1388px;top:504px" width="24" height="23" viewBox="0 0 24 23"><g fill="#5c5c66"><rect x="0" y="0" width="24" height="6.8" rx="1"/><rect x="0" y="8.5" width="7.8" height="5.6"/><rect x="9" y="8.5" width="6.5" height="5.6"/><rect x="17" y="8.5" width="7" height="5.6"/><rect x="0" y="15.5" width="7.8" height="7.3" rx="1"/><rect x="9" y="15.5" width="6.5" height="7.3"/><rect x="17" y="15.5" width="7" height="7.3" rx="1"/></g></svg>
<div class="t" style="left:692px;top:531px;height:16px;line-height:16px;font-size:14px;color:#333;height:18px;line-height:18px;letter-spacing:-0.45px">吨球团矿高炉煤气单耗岗位趋势</div>
<svg class="a" style="left:158px;top:530px" width="1265" height="225" viewBox="158 530 1265 225"><text x="196" y="548" font-size="10" fill="#666" letter-spacing="1" font-family="Liberation Sans">m³/t</text><line x1="201" y1="565.5" x2="1401" y2="565.5" stroke="#efefef" stroke-width="1"/><text x="190" y="567.8" font-size="9" fill="#333" text-anchor="end" font-family="Liberation Sans">450</text><line x1="201" y1="591.5" x2="1401" y2="591.5" stroke="#efefef" stroke-width="1"/><text x="190" y="593.8" font-size="9" fill="#333" text-anchor="end" font-family="Liberation Sans">360</text><line x1="201" y1="617.5" x2="1401" y2="617.5" stroke="#efefef" stroke-width="1"/><text x="190" y="619.8" font-size="9" fill="#333" text-anchor="end" font-family="Liberation Sans">270</text><line x1="201" y1="643.5" x2="1401" y2="643.5" stroke="#efefef" stroke-width="1"/><text x="190" y="645.8" font-size="9" fill="#333" text-anchor="end" font-family="Liberation Sans">180</text><line x1="201" y1="669.5" x2="1401" y2="669.5" stroke="#efefef" stroke-width="1"/><text x="190" y="671.8" font-size="9" fill="#333" text-anchor="end" font-family="Liberation Sans">90</text><text x="190" y="697.8" font-size="9" fill="#333" text-anchor="end" font-family="Liberation Sans">0</text><line x1="201.5" y1="565" x2="201.5" y2="695" stroke="#e0e0e0" stroke-width="1"/><line x1="201" y1="695.5" x2="1401" y2="695.5" stroke="#d7dcef" stroke-width="1"/><text x="221" y="708.5" font-size="9" fill="#444" text-anchor="middle" letter-spacing="1" font-family="Liberation Sans">11-01</text><text x="341" y="708.5" font-size="9" fill="#444" text-anchor="middle" letter-spacing="1" font-family="Liberation Sans">11-04</text><text x="461" y="708.5" font-size="9" fill="#444" text-anchor="middle" letter-spacing="1" font-family="Liberation Sans">11-07</text><text x="581" y="708.5" font-size="9" fill="#444" text-anchor="middle" letter-spacing="1" font-family="Liberation Sans">11-10</text><text x="701" y="708.5" font-size="9" fill="#444" text-anchor="middle" letter-spacing="1" font-family="Liberation Sans">11-13</text><text x="821" y="708.5" font-size="9" fill="#444" text-anchor="middle" letter-spacing="1" font-family="Liberation Sans">11-16</text><text x="941" y="708.5" font-size="9" fill="#444" text-anchor="middle" letter-spacing="1" font-family="Liberation Sans">11-19</text><text x="1061" y="708.5" font-size="9" fill="#444" text-anchor="middle" letter-spacing="1" font-family="Liberation Sans">11-22</text><text x="1181" y="708.5" font-size="9" fill="#444" text-anchor="middle" letter-spacing="1" font-family="Liberation Sans">11-25</text><text x="1301" y="708.5" font-size="9" fill="#444" text-anchor="middle" letter-spacing="1" font-family="Liberation Sans">11-28</text><rect x="210.00" y="631.3" width="7" height="63.70" fill="#c8c8c8"/><rect x="218.00" y="643.5" width="7" height="51.50" fill="#17bcbf"/><rect x="225.75" y="647" width="7" height="48.00" fill="#fb8a17"/><rect x="250.00" y="647" width="7" height="48.00" fill="#3350e6"/><rect x="258.00" y="645.8" width="7" height="49.20" fill="#17bcbf"/><rect x="265.75" y="647" width="7" height="48.00" fill="#fb8a17"/><rect x="290.00" y="643" width="7" height="52.00" fill="#3350e6"/><rect x="298.00" y="641.5" width="7" height="53.50" fill="#17bcbf"/><rect x="305.75" y="641" width="7" height="54.00" fill="#fb8a17"/><rect x="330.00" y="641.6" width="7" height="53.40" fill="#3350e6"/><rect x="338.00" y="637.3" width="7" height="57.70" fill="#17bcbf"/><rect x="345.75" y="638.6" width="7" height="56.40" fill="#fb8a17"/><rect x="370.00" y="641.6" width="7" height="53.40" fill="#3350e6"/><rect x="378.00" y="642.9" width="7" height="52.10" fill="#17bcbf"/><rect x="385.75" y="645.1" width="7" height="49.90" fill="#fb8a17"/><rect x="410.00" y="645.1" width="7" height="49.90" fill="#3350e6"/><rect x="418.00" y="658.8" width="7" height="36.20" fill="#17bcbf"/><rect x="425.75" y="658.8" width="7" height="36.20" fill="#c8c8c8"/><rect x="450.00" y="658.8" width="7" height="36.20" fill="#c8c8c8"/><rect x="458.00" y="658.8" width="7" height="36.20" fill="#c8c8c8"/><rect x="465.75" y="658.8" width="7" height="36.20" fill="#c8c8c8"/><rect x="490.00" y="658.8" width="7" height="36.20" fill="#c8c8c8"/><rect x="498.00" y="658.8" width="7" height="36.20" fill="#c8c8c8"/><rect x="505.75" y="658.8" width="7" height="36.20" fill="#c8c8c8"/><rect x="530.00" y="658.8" width="7" height="36.20" fill="#c8c8c8"/><rect x="538.00" y="658.8" width="7" height="36.20" fill="#c8c8c8"/><rect x="545.75" y="658.8" width="7" height="36.20" fill="#c8c8c8"/><rect x="570.00" y="658.8" width="7" height="36.20" fill="#c8c8c8"/><rect x="578.00" y="658.8" width="7" height="36.20" fill="#c8c8c8"/><rect x="585.75" y="658.8" width="7" height="36.20" fill="#c8c8c8"/><rect x="610.00" y="658.8" width="7" height="36.20" fill="#c8c8c8"/><rect x="618.00" y="649.4" width="7" height="45.60" fill="#17bcbf"/><rect x="625.75" y="646.8" width="7" height="48.20" fill="#fb8a17"/><rect x="650.00" y="642.9" width="7" height="52.10" fill="#3350e6"/><rect x="658.00" y="644.6" width="7" height="50.40" fill="#17bcbf"/><rect x="665.75" y="645.4" width="7" height="49.60" fill="#fb8a17"/><rect x="690.00" y="658.8" width="7" height="36.20" fill="#3350e6"/><rect x="698.00" y="648" width="7" height="47.00" fill="#17bcbf"/><rect x="705.75" y="639.3" width="7" height="55.70" fill="#fb8a17"/><rect x="730.00" y="642.3" width="7" height="52.70" fill="#3350e6"/><rect x="738.00" y="644.2" width="7" height="50.80" fill="#17bcbf"/><rect x="745.75" y="646" width="7" height="49.00" fill="#fb8a17"/><rect x="770.00" y="639.3" width="7" height="55.70" fill="#3350e6"/><rect x="778.00" y="644.6" width="7" height="50.40" fill="#17bcbf"/><rect x="785.75" y="652.7" width="7" height="42.30" fill="#fb8a17"/><rect x="810.00" y="637.1" width="7" height="57.90" fill="#3350e6"/><rect x="818.00" y="645.7" width="7" height="49.30" fill="#17bcbf"/><rect x="825.75" y="642.3" width="7" height="52.70" fill="#fb8a17"/><rect x="850.00" y="638.2" width="7" height="56.80" fill="#3350e6"/><rect x="858.00" y="642.9" width="7" height="52.10" fill="#17bcbf"/><rect x="865.75" y="642.3" width="7" height="52.70" fill="#fb8a17"/><rect x="890.00" y="641.8" width="7" height="53.20" fill="#3350e6"/><rect x="898.00" y="641.8" width="7" height="53.20" fill="#17bcbf"/><rect x="905.75" y="637.1" width="7" height="57.90" fill="#fb8a17"/><rect x="930.00" y="633.4" width="7" height="61.60" fill="#3350e6"/><rect x="938.00" y="638.4" width="7" height="56.60" fill="#17bcbf"/><rect x="945.75" y="638.2" width="7" height="56.80" fill="#fb8a17"/><rect x="970.00" y="636.2" width="7" height="58.80" fill="#3350e6"/><rect x="978.00" y="639.5" width="7" height="55.50" fill="#17bcbf"/><rect x="985.75" y="643.1" width="7" height="51.90" fill="#fb8a17"/><rect x="1010.00" y="646.3" width="7" height="48.70" fill="#3350e6"/><rect x="1018.00" y="644" width="7" height="51.00" fill="#17bcbf"/><rect x="1025.75" y="644.9" width="7" height="50.10" fill="#fb8a17"/><rect x="1050.00" y="642.3" width="7" height="52.70" fill="#3350e6"/><rect x="1058.00" y="643.5" width="7" height="51.50" fill="#17bcbf"/><rect x="1065.75" y="646" width="7" height="49.00" fill="#fb8a17"/><rect x="1090.00" y="642.3" width="7" height="52.70" fill="#3350e6"/><rect x="1098.00" y="646.3" width="7" height="48.70" fill="#17bcbf"/><rect x="1105.75" y="649" width="7" height="46.00" fill="#fb8a17"/><rect x="1130.00" y="641.4" width="7" height="53.60" fill="#3350e6"/><rect x="1138.00" y="643.3" width="7" height="51.70" fill="#17bcbf"/><rect x="1145.75" y="644.3" width="7" height="50.70" fill="#fb8a17"/><rect x="1170.00" y="638.6" width="7" height="56.40" fill="#3350e6"/><rect x="1178.00" y="636.2" width="7" height="58.80" fill="#17bcbf"/><rect x="1185.75" y="646.1" width="7" height="48.90" fill="#fb8a17"/><rect x="1210.00" y="646.1" width="7" height="48.90" fill="#3350e6"/><rect x="1218.00" y="625.8" width="7" height="69.20" fill="#17bcbf"/><rect x="1225.75" y="634.3" width="7" height="60.70" fill="#fb8a17"/><rect x="1250.00" y="650.8" width="7" height="44.20" fill="#3350e6"/><rect x="1258.00" y="653.2" width="7" height="41.80" fill="#17bcbf"/><rect x="1265.75" y="654.2" width="7" height="40.80" fill="#fb8a17"/><rect x="1290.00" y="655.8" width="7" height="39.20" fill="#3350e6"/><rect x="1298.00" y="654.2" width="7" height="40.80" fill="#17bcbf"/><rect x="1305.75" y="654.2" width="7" height="40.80" fill="#fb8a17"/><rect x="1330.00" y="644.6" width="7" height="50.40" fill="#3350e6"/><rect x="1338.00" y="642" width="7" height="53.00" fill="#17bcbf"/><rect x="1345.75" y="638.5" width="7" height="56.50" fill="#fb8a17"/><rect x="1370.00" y="643.9" width="7" height="51.10" fill="#3350e6"/><rect x="1378.00" y="642.6" width="7" height="52.40" fill="#17bcbf"/><rect x="1385.75" y="642" width="7" height="53.00" fill="#fb8a17"/><path d="M218.30 695 V643.80 H224.70 V695 M226.05 695 V647.30 H232.45 V695 M250.30 695 V647.30 H256.70 V695 M258.30 695 V646.10 H264.70 V695 M266.05 695 V647.30 H272.45 V695 M290.30 695 V643.30 H296.70 V695 M298.30 695 V641.80 H304.70 V695 M306.05 695 V641.30 H312.45 V695 M330.30 695 V641.90 H336.70 V695 M338.30 695 V637.60 H344.70 V695 M346.05 695 V638.90 H352.45 V695 M370.30 695 V641.90 H376.70 V695 M378.30 695 V643.20 H384.70 V695 M386.05 695 V645.40 H392.45 V695 M410.30 695 V645.40 H416.70 V695 M418.30 695 V659.10 H424.70 V695 M618.30 695 V649.70 H624.70 V695 M626.05 695 V647.10 H632.45 V695 M650.30 695 V643.20 H656.70 V695 M658.30 695 V644.90 H664.70 V695 M666.05 695 V645.70 H672.45 V695 M690.30 695 V659.10 H696.70 V695 M698.30 695 V648.30 H704.70 V695 M706.05 695 V639.60 H712.45 V695 M730.30 695 V642.60 H736.70 V695 M738.30 695 V644.50 H744.70 V695 M746.05 695 V646.30 H752.45 V695 M770.30 695 V639.60 H776.70 V695 M778.30 695 V644.90 H784.70 V695 M786.05 695 V653.00 H792.45 V695 M810.30 695 V637.40 H816.70 V695 M818.30 695 V646.00 H824.70 V695 M826.05 695 V642.60 H832.45 V695 M850.30 695 V638.50 H856.70 V695 M858.30 695 V643.20 H864.70 V695 M866.05 695 V642.60 H872.45 V695 M890.30 695 V642.10 H896.70 V695 M898.30 695 V642.10 H904.70 V695 M906.05 695 V637.40 H912.45 V695 M930.30 695 V633.70 H936.70 V695 M938.30 695 V638.70 H944.70 V695 M946.05 695 V638.50 H952.45 V695 M970.30 695 V636.50 H976.70 V695 M978.30 695 V639.80 H984.70 V695 M986.05 695 V643.40 H992.45 V695 M1010.30 695 V646.60 H1016.70 V695 M1018.30 695 V644.30 H1024.70 V695 M1026.05 695 V645.20 H1032.45 V695 M1050.30 695 V642.60 H1056.70 V695 M1058.30 695 V643.80 H1064.70 V695 M1066.05 695 V646.30 H1072.45 V695 M1090.30 695 V642.60 H1096.70 V695 M1098.30 695 V646.60 H1104.70 V695 M1106.05 695 V649.30 H1112.45 V695 M1130.30 695 V641.70 H1136.70 V695 M1138.30 695 V643.60 H1144.70 V695 M1146.05 695 V644.60 H1152.45 V695 M1170.30 695 V638.90 H1176.70 V695 M1178.30 695 V636.50 H1184.70 V695 M1186.05 695 V646.40 H1192.45 V695 M1210.30 695 V646.40 H1216.70 V695 M1218.30 695 V626.10 H1224.70 V695 M1226.05 695 V634.60 H1232.45 V695 M1250.30 695 V651.10 H1256.70 V695 M1258.30 695 V653.50 H1264.70 V695 M1266.05 695 V654.50 H1272.45 V695 M1290.30 695 V656.10 H1296.70 V695 M1298.30 695 V654.50 H1304.70 V695 M1306.05 695 V654.50 H1312.45 V695 M1330.30 695 V644.90 H1336.70 V695 M1338.30 695 V642.30 H1344.70 V695 M1346.05 695 V638.80 H1352.45 V695 M1370.30 695 V644.20 H1376.70 V695 M1378.30 695 V642.90 H1384.70 V695 M1386.05 695 V642.30 H1392.45 V695" fill="none" stroke="#b4392f" stroke-width="1.1" stroke-dasharray="3 2"/><line x1="201" y1="630.2" x2="1401" y2="630.2" stroke="#ff1a1a" stroke-width="1.7" stroke-dasharray="6 4.4"/><text x="1280" y="629.3" font-size="10" fill="#222" font-family="Liberation Sans">企业管控值：225.00m³/t</text><polyline points="221,643.2 261,645.4 301,641 341,637.3 381,642.3 421,649.8 461,649.8" fill="none" stroke="#1ebfe6" stroke-width="1.7"/><polyline points="621,646 661,644 701,646.8 741,643.8 781,643.8 821,641 861,640.1 901,639.3 941,635.6 981,638.6 1021,644 1061,642.3 1101,644.6 1141,642.3 1181,639.4 1221,634.3 1261,652.2 1301,652.7 1341,641.6 1381,641.6" fill="none" stroke="#1ebfe6" stroke-width="1.7"/><polyline points="461,649.8 501,649.8 541,649.8 581,649.8 621,646" fill="none" stroke="#c8c8c8" stroke-width="2" stroke-dasharray="6 4"/><circle cx="221" cy="643.2" r="2.9" fill="#fff" stroke="#f20f0f" stroke-width="1.6"/><circle cx="261" cy="645.4" r="2.9" fill="#fff" stroke="#f20f0f" stroke-width="1.6"/><circle cx="301" cy="641" r="2.9" fill="#fff" stroke="#f20f0f" stroke-width="1.6"/><circle cx="341" cy="637.3" r="2.9" fill="#fff" stroke="#f20f0f" stroke-width="1.6"/><circle cx="381" cy="642.3" r="2.9" fill="#fff" stroke="#f20f0f" stroke-width="1.6"/><circle cx="421" cy="649.8" r="2.9" fill="#fff" stroke="#f20f0f" stroke-width="1.6"/><circle cx="461" cy="649.8" r="2.9" fill="#fff" stroke="#c8c8c8" stroke-width="1.5"/><circle cx="501" cy="649.8" r="2.9" fill="#fff" stroke="#c8c8c8" stroke-width="1.5"/><circle cx="541" cy="649.8" r="2.9" fill="#fff" stroke="#c8c8c8" stroke-width="1.5"/><circle cx="581" cy="649.8" r="2.9" fill="#fff" stroke="#c8c8c8" stroke-width="1.5"/><circle cx="621" cy="646" r="2.9" fill="#fff" stroke="#f20f0f" stroke-width="1.6"/><circle cx="661" cy="644" r="2.9" fill="#fff" stroke="#f20f0f" stroke-width="1.6"/><circle cx="701" cy="646.8" r="2.9" fill="#fff" stroke="#f20f0f" stroke-width="1.6"/><circle cx="741" cy="643.8" r="2.9" fill="#fff" stroke="#f20f0f" stroke-width="1.6"/><circle cx="781" cy="643.8" r="2.9" fill="#fff" stroke="#f20f0f" stroke-width="1.6"/><circle cx="821" cy="641" r="2.9" fill="#fff" stroke="#f20f0f" stroke-width="1.6"/><circle cx="861" cy="640.1" r="2.9" fill="#fff" stroke="#f20f0f" stroke-width="1.6"/><circle cx="901" cy="639.3" r="2.9" fill="#fff" stroke="#f20f0f" stroke-width="1.6"/><circle cx="941" cy="635.6" r="2.9" fill="#fff" stroke="#f20f0f" stroke-width="1.6"/><circle cx="981" cy="638.6" r="2.9" fill="#fff" stroke="#f20f0f" stroke-width="1.6"/><circle cx="1021" cy="644" r="2.9" fill="#fff" stroke="#f20f0f" stroke-width="1.6"/><circle cx="1061" cy="642.3" r="2.9" fill="#fff" stroke="#f20f0f" stroke-width="1.6"/><circle cx="1101" cy="644.6" r="2.9" fill="#fff" stroke="#f20f0f" stroke-width="1.6"/><circle cx="1141" cy="642.3" r="2.9" fill="#fff" stroke="#f20f0f" stroke-width="1.6"/><circle cx="1181" cy="639.4" r="2.9" fill="#fff" stroke="#f20f0f" stroke-width="1.6"/><circle cx="1221" cy="634.3" r="2.9" fill="#fff" stroke="#f20f0f" stroke-width="1.6"/><circle cx="1261" cy="652.2" r="2.9" fill="#fff" stroke="#f20f0f" stroke-width="1.6"/><circle cx="1301" cy="652.7" r="2.9" fill="#fff" stroke="#f20f0f" stroke-width="1.6"/><circle cx="1341" cy="641.6" r="2.9" fill="#fff" stroke="#f20f0f" stroke-width="1.6"/><circle cx="1381" cy="641.6" r="2.9" fill="#fff" stroke="#f20f0f" stroke-width="1.6"/><g fill="#b90d0d"><rect x="1217" y="592" width="8" height="2"/><rect x="1217" y="595.5" width="8" height="2"/><rect x="1217" y="598.5" width="8" height="3"/><path d="M1211.5 601 H1230.5 L1221 613.5 Z"/></g><rect x="696" y="726" width="9" height="9" fill="#3350e6"/><text x="710" y="734.5" font-size="10" fill="#333" font-family="Liberation Sans">甲班</text><rect x="746" y="726" width="9" height="9" fill="#17bcbf"/><text x="760" y="734.5" font-size="10" fill="#333" font-family="Liberation Sans">乙班</text><rect x="795" y="726" width="9" height="9" fill="#fb8a17"/><text x="809" y="734.5" font-size="10" fill="#333" font-family="Liberation Sans">丙班</text><line x1="845" y1="730.5" x2="857" y2="730.5" stroke="#1ab8e2" stroke-width="1.6"/><circle cx="851" cy="730.5" r="3" fill="#1ab8e2"/><text x="861" y="734.5" font-size="10" fill="#333" font-family="Liberation Sans">平均</text><path d="M893 729 V726.5 H895.5 M899.5 726.5 H902 V729 M902 732 V734.5 H899.5 M895.5 734.5 H893 V732" fill="none" stroke="#333" stroke-width="1"/><text x="906" y="734.5" font-size="10" fill="#333" font-family="Liberation Sans">轮休</text></svg>
<div class="a" style="left:169px;top:755px;width:1254px;height:14px;background:#d4fbfc;overflow:hidden"><div class="t" style="left:18px;top:7px;height:16px;line-height:16px;font-size:11px;color:#333">◎ 2022-11-01至2022-11-30，球团作业区吨球团矿高炉煤气单耗为<b style="color:#f00">180.96</b>m³/t，低于企业管控值<b>19.57%</b></div></div>
<div class="a" style="left:0;top:769px;width:1430px;height:5px;background:#eef1f5"></div>
</body></html>
